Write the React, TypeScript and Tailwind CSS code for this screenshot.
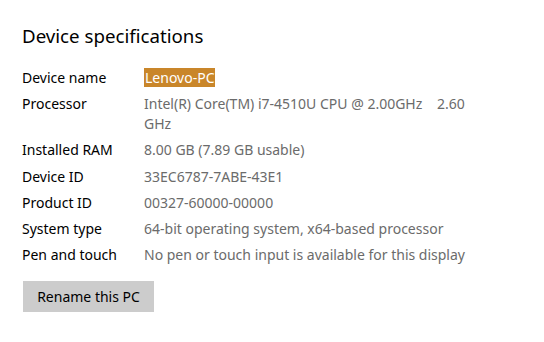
import React from "react";

const rows: [string, React.ReactNode][] = [
  ["Processor", <>Intel(R) Core(TM) i7-4510U CPU @ 2.00GHz&nbsp;&nbsp;&nbsp; 2.60<br />GHz</>],
  ["Installed RAM", "8.00 GB (7.89 GB usable)"],
  ["Device ID", "33EC6787-7ABE-43E1"],
  ["Product ID", "00327-60000-00000"],
  ["System type", "64-bit operating system, x64-based processor"],
  ["Pen and touch", "No pen or touch input is available for this display"],
];

export default function App() {
  return (
    <div
      className="w-[544px] h-[342px] bg-white overflow-hidden pl-[22px] pt-[22px]"
      style={{ fontFamily: '"Noto Sans", "Open Sans", sans-serif' }}
    >
      <h1 className="text-[18.7px] leading-[28px] text-black">Device specifications</h1>
      <div className="mt-[18px] flex flex-col gap-[6.2px] text-[14px] leading-[20px]">
        <div className="flex">
          <div className="w-[122px] shrink-0 text-black">Device name</div>
          <div>
            <span className="inline-block bg-[#c9862a] text-white pl-[1px] pr-[1px] leading-[19px]">Lenovo-PC</span>
          </div>
        </div>
        {rows.map(([k, v]) => (
          <div className="flex" key={k}>
            <div className="w-[122px] shrink-0 text-black">{k}</div>
            <div className="text-[#6b6b6b] whitespace-nowrap">{v}</div>
          </div>
        ))}
      </div>
      <button className="mt-[16px] ml-[1px] w-[131px] h-[31px] bg-[#cccccc] text-black text-[14px]">
        Rename this PC
      </button>
    </div>
  );
}
